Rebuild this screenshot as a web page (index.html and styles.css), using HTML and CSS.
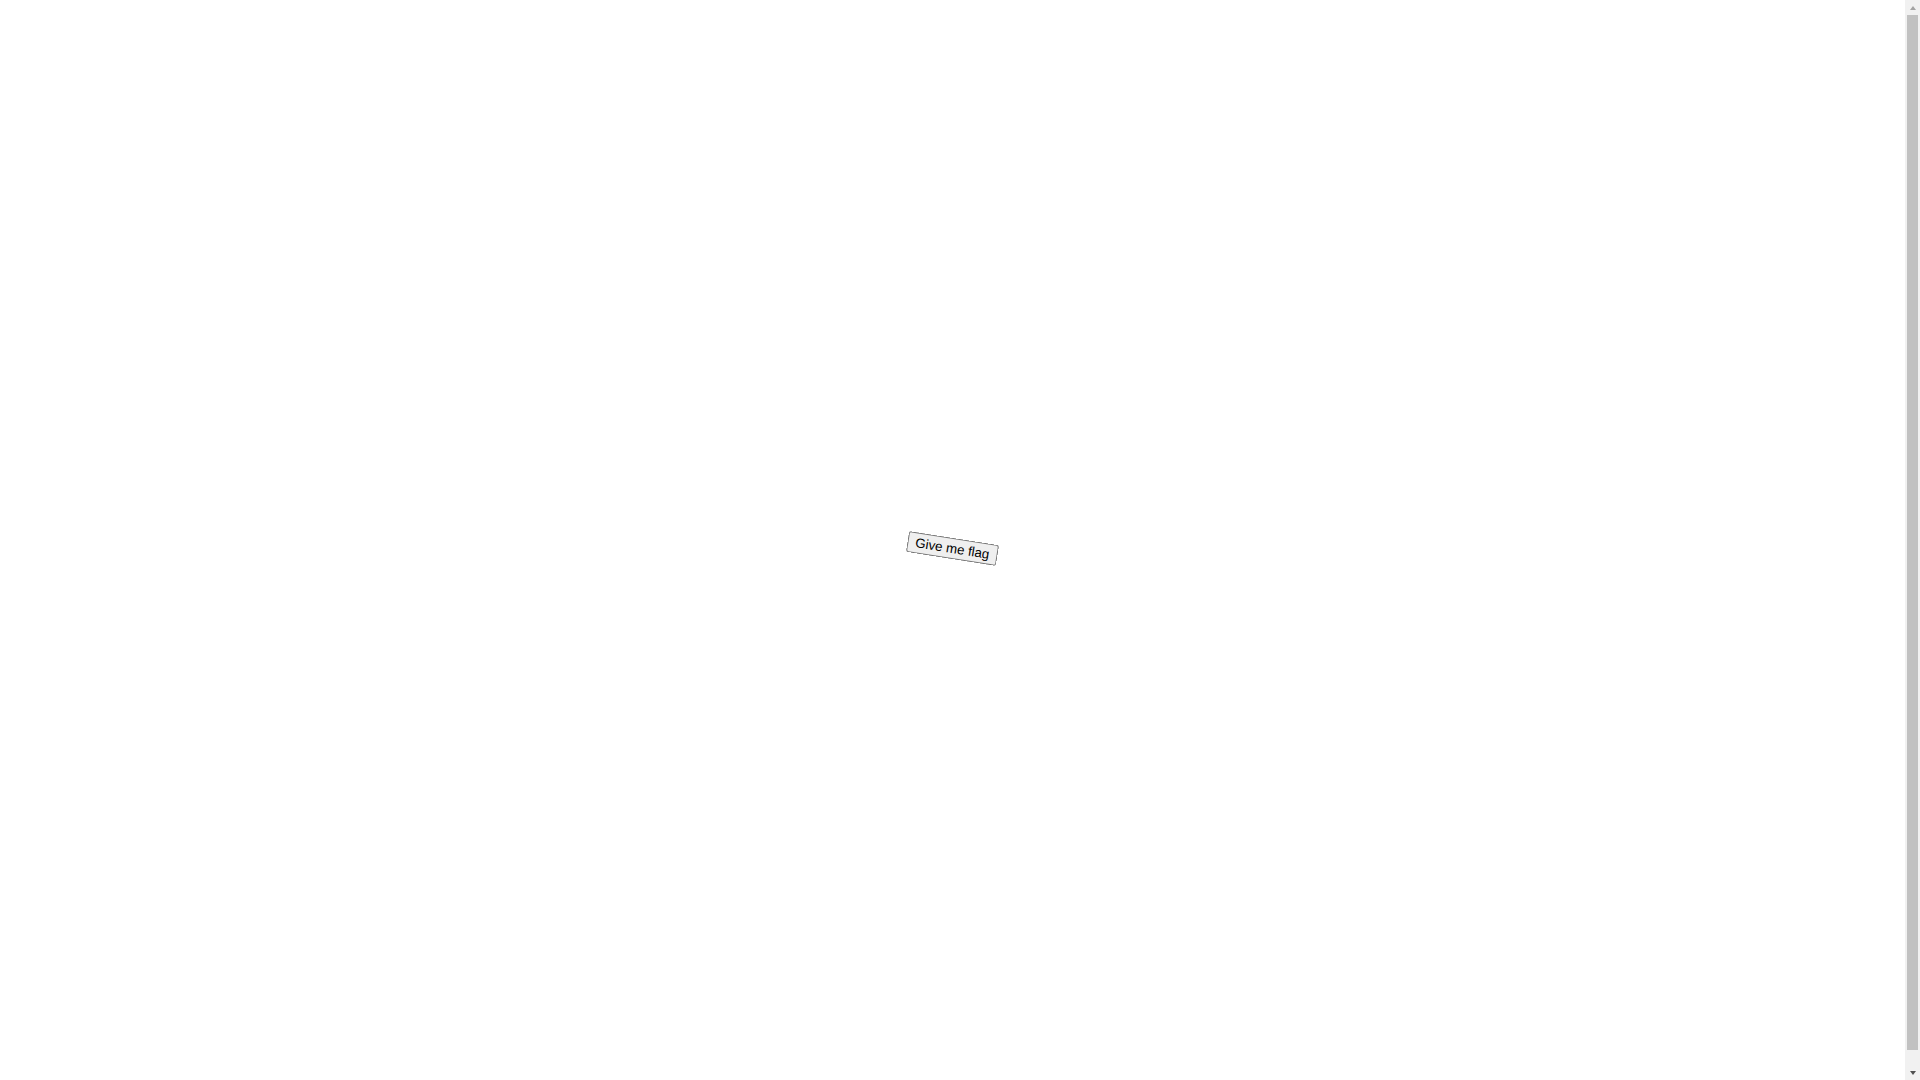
FILE: index.html
```html
<!DOCTYPE html>
<html lang="en">
<head>
<meta charset="utf-8">
<title>Give me flag</title>
<link rel="stylesheet" href="styles.css">
</head>
<body class="page">
<button class="flag-button" type="button">Give me flag</button>
<div class="scrollbar" aria-hidden="true">
  <div class="scroll-arrow"><span class="arrow-up"></span></div>
  <div class="scroll-track"><div class="scroll-thumb"></div></div>
  <div class="scroll-arrow"><span class="arrow-down"></span></div>
</div>
</body>
</html>
```

FILE: styles.css
```css
html {
  background: #ffffff;
}

.page {
  margin: 8px 23px 8px 8px;
  height: 100vh;
  display: flex;
  align-items: center;
  justify-content: center;
  background: #ffffff;
}

.flag-button {
  font-family: "Liberation Sans", Arial, sans-serif;
  font-size: 13.333px;
  transform: rotate(9deg);
}

.scrollbar {
  position: fixed;
  top: 0;
  right: 0;
  bottom: 0;
  width: 15px;
  background: #f1f1f1;
  display: flex;
  flex-direction: column;
}

.scroll-arrow {
  height: 15px;
  display: flex;
  align-items: center;
  justify-content: center;
  flex: none;
}

.arrow-up {
  width: 0;
  height: 0;
  border-left: 3.5px solid transparent;
  border-right: 3.5px solid transparent;
  border-bottom: 4px solid #a3a3a3;
}

.arrow-down {
  width: 0;
  height: 0;
  border-left: 3.5px solid transparent;
  border-right: 3.5px solid transparent;
  border-top: 4px solid #505050;
}

.scroll-track {
  flex: 1;
  padding: 0 2px 15px 2px;
  display: flex;
  flex-direction: column;
}

.scroll-thumb {
  flex: 1;
  background: #c1c1c1;
}
```
